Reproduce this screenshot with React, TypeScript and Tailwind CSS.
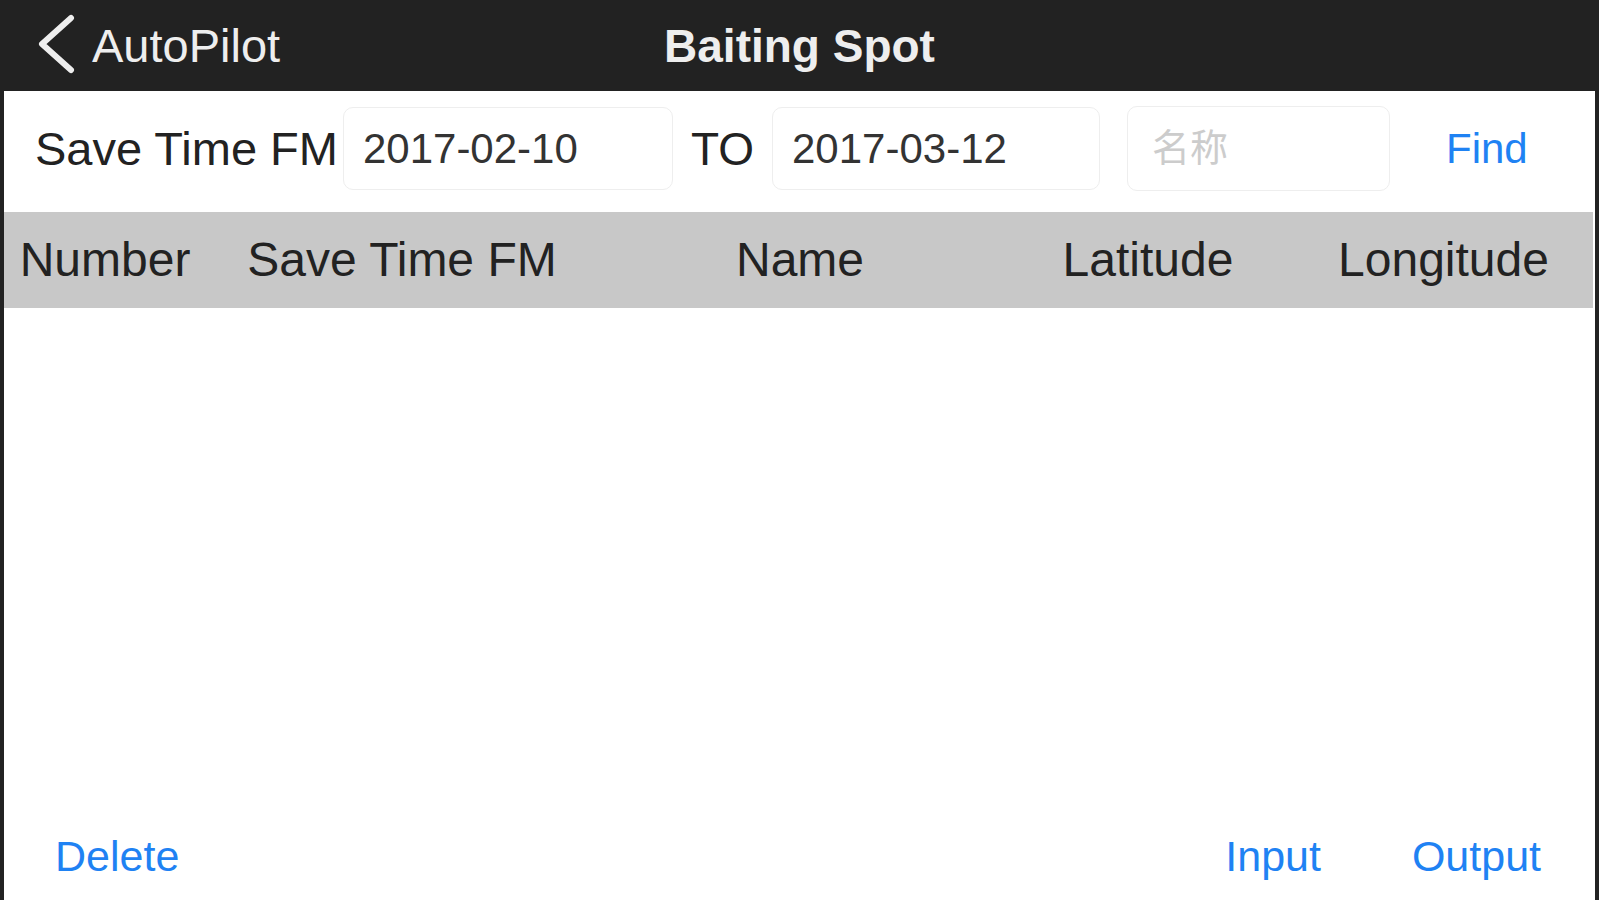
import { useState } from 'react'

const COLUMNS = [
  { label: 'Number', w: 'w-[202px]' },
  { label: 'Save Time FM', w: 'w-[392px]' },
  { label: 'Name', w: 'w-[404px]' },
  { label: 'Latitude', w: 'w-[292px]' },
  { label: 'Longitude', w: 'flex-1' },
]

function BackChevron() {
  return (
    <svg width="42" height="64" viewBox="0 0 42 64" className="shrink-0">
      <polyline
        points="35,4 6,30 35,56"
        fill="none"
        stroke="#eeeeee"
        strokeWidth="6"
        strokeLinecap="round"
        strokeLinejoin="round"
      />
    </svg>
  )
}

export default function App() {
  const [from, setFrom] = useState('2017-02-10')
  const [to, setTo] = useState('2017-03-12')
  const [name, setName] = useState('')

  return (
    <div className="w-[1599px] h-[900px] bg-[#222222] flex flex-col font-['Liberation_Sans','Noto_Sans_CJK_SC',sans-serif] overflow-hidden">
      {/* Barra de navegación */}
      <div className="h-[91px] shrink-0 grid grid-cols-[1fr_auto_1fr] items-center">
        <div className="flex items-center">
          <div className="ml-[36px]">
            <BackChevron />
          </div>
          <span className="ml-[14px] text-[47px] leading-none text-[#eeeeee]">AutoPilot</span>
        </div>
        <h1 className="text-[46px] leading-none font-bold text-[#eeeeee]">Baiting Spot</h1>
        <div />
      </div>

      <div className="flex-1 mx-[4px] bg-white flex flex-col">
        {/* Filtros */}
        <div className="h-[121px] shrink-0 flex items-center pb-[6px]">
          <span className="ml-[31px] text-[47px] leading-none text-[#222222] whitespace-nowrap">Save Time FM</span>
          <input
            value={from}
            onChange={(e) => setFrom(e.target.value)}
            className="ml-[5px] w-[330px] h-[83px] rounded-[10px] border border-[#eeeeee] px-[19px] text-[42px] text-[#333333] outline-none"
          />
          <span className="ml-[18px] text-[46px] leading-none text-[#222222]">TO</span>
          <input
            value={to}
            onChange={(e) => setTo(e.target.value)}
            className="ml-[18px] w-[328px] h-[83px] rounded-[10px] border border-[#eeeeee] px-[19px] text-[42px] text-[#333333] outline-none"
          />
          <input
            value={name}
            onChange={(e) => setName(e.target.value)}
            placeholder="名称"
            className="ml-[27px] w-[263px] h-[85px] rounded-[10px] border border-[#eeeeee] px-[24px] text-[38px] text-[#333333] placeholder:text-[#cccccc] outline-none"
          />
          <button className="ml-[56px] text-[42px] leading-none text-[#1f82f3]">Find</button>
        </div>

        {/* Cabecera de la tabla */}
        <div className="h-[96px] shrink-0 mr-[2px] bg-[#c8c8c8] flex items-center">
          {COLUMNS.map((c) => (
            <div key={c.label} className={`${c.w} text-center text-[48px] leading-none text-[#222222] whitespace-nowrap`}>
              {c.label}
            </div>
          ))}
        </div>

        <div className="flex-1" />

        {/* Acciones */}
        <div className="h-[88px] shrink-0 flex items-center text-[43px] leading-none text-[#1f82f3]">
          <button className="ml-[51px]">Delete</button>
          <div className="flex-1" />
          <button>Input</button>
          <button className="ml-[91px] mr-[54px]">Output</button>
        </div>
      </div>
    </div>
  )
}
